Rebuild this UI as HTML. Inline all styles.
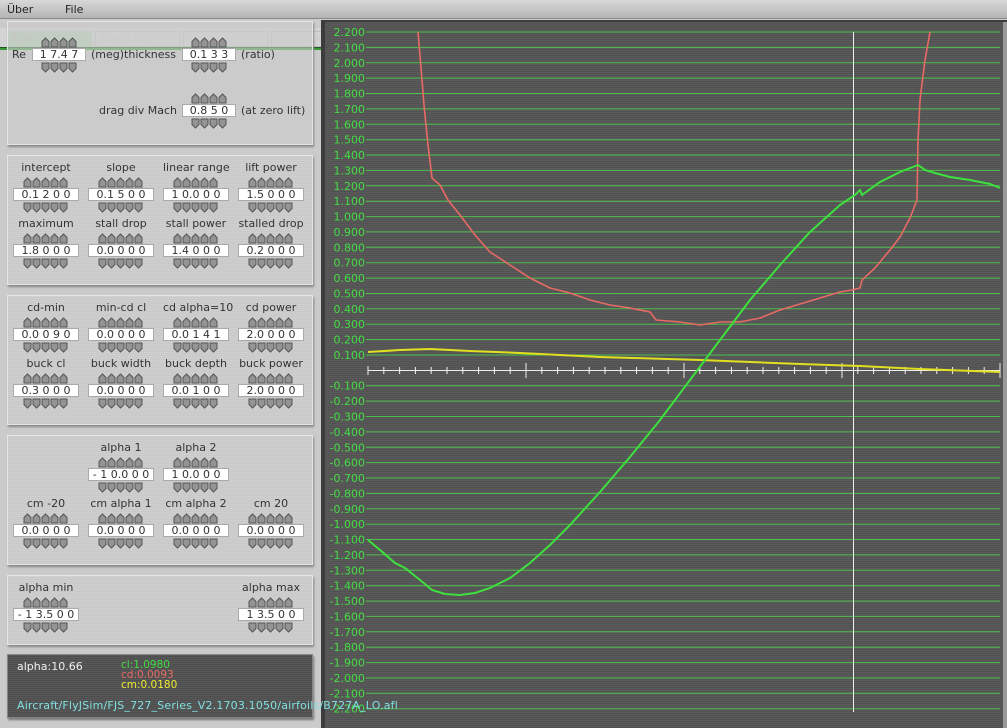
<!DOCTYPE html>
<html><head><meta charset="utf-8"><style>
*{margin:0;padding:0;box-sizing:border-box}
body{width:1007px;height:728px;overflow:hidden;position:relative;background:#cbcbcb;font-family:"DejaVu Sans","Liberation Sans",sans-serif;font-size:11px;color:#333}
.abs{position:absolute}
.menu{left:0;top:0;width:1007px;height:19px;background:linear-gradient(#d8d8d8,#b4b4b4);border-bottom:1px solid #8a8a8a}
.menu span{position:absolute;top:3px;font-size:11px;color:#222}
.pn{position:absolute;left:7px;width:306px;background:repeating-linear-gradient(#cfcfcf 0 1px,#c9c9c9 1px 2px);border:1px solid #e6e6e6;box-shadow:1px 2px 2px #888}
.lb{position:absolute;text-align:center;font-size:11px;color:#333;line-height:14px;white-space:nowrap}
.fd{position:absolute;height:13px;background:#fff;border:1px solid #aaa;font-size:11px;line-height:11px;text-align:center;color:#333;letter-spacing:0;white-space:pre;overflow:hidden}
svg.ar{position:absolute;width:45px;height:10px;overflow:visible}
</style></head><body>
<svg width="0" height="0" style="position:absolute">
<defs>
<path id="u" d="M1,10 V4.5 L4.5,1 L8,4.5 V10 Z" fill="#949494" stroke="#555" stroke-width="1"/>
<path id="d" d="M1,0 V5.5 L4.5,9 L8,5.5 V0 Z" fill="#949494" stroke="#555" stroke-width="1"/>
<g id="u5"><use href="#u"/><use href="#u" x="9"/><use href="#u" x="18"/><use href="#u" x="27"/><use href="#u" x="36"/></g>
<g id="d5"><use href="#d"/><use href="#d" x="9"/><use href="#d" x="18"/><use href="#d" x="27"/><use href="#d" x="36"/></g>
<g id="u4"><use href="#u"/><use href="#u" x="9"/><use href="#u" x="18"/><use href="#u" x="27"/></g>
<g id="d4"><use href="#d"/><use href="#d" x="9"/><use href="#d" x="18"/><use href="#d" x="27"/></g>
</defs></svg>

<div class="abs menu"><span style="left:7px">Über</span><span style="left:65px">File</span></div>
<div class="abs" style="left:0;top:28px;width:1007px;height:20px;background:#d4d4d4"></div>
<div class="abs" style="left:7px;top:31px;width:85px;height:16px;background:#b7d1b7;color:#bbb;padding-left:3px">AOA-</div>
<div class="abs" style="left:95px;top:31px;width:85px;height:16px;border:1px solid #c0c0c0;color:#ccc;padding-left:3px">AOA-180</div>
<div class="abs" style="left:183px;top:31px;width:85px;height:16px;border:1px solid #c0c0c0"></div>
<div class="abs" style="left:271px;top:31px;width:60px;height:16px;border:1px solid #c0c0c0;color:#ccc;padding-left:3px">Teilstück</div>
<div class="abs" style="left:0;top:47px;width:1007px;height:3px;background:#3a9a3a;border-top:1px solid #225522"></div>

<div class="abs" style="left:321px;top:20px;width:686px;height:708px;background:#3c3c3c"></div>
<svg class="abs" style="left:0;top:0" width="1007" height="728">
<defs><pattern id="sl" width="4" height="2" patternUnits="userSpaceOnUse"><rect width="4" height="1" fill="#5a5a5a"/><rect y="1" width="4" height="1" fill="#525252"/></pattern></defs>
<rect x="325" y="22" width="678" height="706" fill="url(#sl)"/>
<rect x="1003" y="22" width="4" height="706" fill="#9a9a9a"/>
<g stroke="#4fc04f" stroke-width="1">
<line x1="366" x2="1000" y1="32" y2="32"/><line x1="366" x2="1000" y1="47.4" y2="47.4"/><line x1="366" x2="1000" y1="62.8" y2="62.8"/><line x1="366" x2="1000" y1="78.1" y2="78.1"/><line x1="366" x2="1000" y1="93.5" y2="93.5"/><line x1="366" x2="1000" y1="108.9" y2="108.9"/><line x1="366" x2="1000" y1="124.3" y2="124.3"/><line x1="366" x2="1000" y1="139.7" y2="139.7"/><line x1="366" x2="1000" y1="155" y2="155"/><line x1="366" x2="1000" y1="170.4" y2="170.4"/><line x1="366" x2="1000" y1="185.8" y2="185.8"/><line x1="366" x2="1000" y1="201.2" y2="201.2"/><line x1="366" x2="1000" y1="216.6" y2="216.6"/><line x1="366" x2="1000" y1="231.9" y2="231.9"/><line x1="366" x2="1000" y1="247.3" y2="247.3"/><line x1="366" x2="1000" y1="262.7" y2="262.7"/><line x1="366" x2="1000" y1="278.1" y2="278.1"/><line x1="366" x2="1000" y1="293.5" y2="293.5"/><line x1="366" x2="1000" y1="308.8" y2="308.8"/><line x1="366" x2="1000" y1="324.2" y2="324.2"/><line x1="366" x2="1000" y1="339.6" y2="339.6"/><line x1="366" x2="1000" y1="355" y2="355"/>
<line x1="366" x2="1000" y1="385.7" y2="385.7"/><line x1="366" x2="1000" y1="401.1" y2="401.1"/><line x1="366" x2="1000" y1="416.5" y2="416.5"/><line x1="366" x2="1000" y1="431.9" y2="431.9"/><line x1="366" x2="1000" y1="447.3" y2="447.3"/><line x1="366" x2="1000" y1="462.6" y2="462.6"/><line x1="366" x2="1000" y1="478" y2="478"/><line x1="366" x2="1000" y1="493.4" y2="493.4"/><line x1="366" x2="1000" y1="508.8" y2="508.8"/><line x1="366" x2="1000" y1="524.2" y2="524.2"/><line x1="366" x2="1000" y1="539.5" y2="539.5"/><line x1="366" x2="1000" y1="554.9" y2="554.9"/><line x1="366" x2="1000" y1="570.3" y2="570.3"/><line x1="366" x2="1000" y1="585.7" y2="585.7"/><line x1="366" x2="1000" y1="601.1" y2="601.1"/><line x1="366" x2="1000" y1="616.4" y2="616.4"/><line x1="366" x2="1000" y1="631.8" y2="631.8"/><line x1="366" x2="1000" y1="647.2" y2="647.2"/><line x1="366" x2="1000" y1="662.6" y2="662.6"/><line x1="366" x2="1000" y1="678" y2="678"/><line x1="366" x2="1000" y1="693.3" y2="693.3"/><line x1="366" x2="1000" y1="708.7" y2="708.7"/>
</g>
<g fill="#44dd44" font-family="DejaVu Sans, Liberation Sans, sans-serif" font-size="11" text-anchor="end">
<text x="365" y="36">2.200</text><text x="365" y="51.4">2.100</text><text x="365" y="66.8">2.000</text><text x="365" y="82.1">1.900</text><text x="365" y="97.5">1.800</text><text x="365" y="112.9">1.700</text><text x="365" y="128.3">1.600</text><text x="365" y="143.7">1.500</text><text x="365" y="159">1.400</text><text x="365" y="174.4">1.300</text><text x="365" y="189.8">1.200</text><text x="365" y="205.2">1.100</text><text x="365" y="220.6">1.000</text><text x="365" y="235.9">0.900</text><text x="365" y="251.3">0.800</text><text x="365" y="266.7">0.700</text><text x="365" y="282.1">0.600</text><text x="365" y="297.5">0.500</text><text x="365" y="312.8">0.400</text><text x="365" y="328.2">0.300</text><text x="365" y="343.6">0.200</text><text x="365" y="359">0.100</text>
<text x="365" y="389.7">-0.100</text><text x="365" y="405.1">-0.200</text><text x="365" y="420.5">-0.300</text><text x="365" y="435.9">-0.400</text><text x="365" y="451.3">-0.500</text><text x="365" y="466.6">-0.600</text><text x="365" y="482">-0.700</text><text x="365" y="497.4">-0.800</text><text x="365" y="512.8">-0.900</text><text x="365" y="528.2">-1.000</text><text x="365" y="543.5">-1.100</text><text x="365" y="558.9">-1.200</text><text x="365" y="574.3">-1.300</text><text x="365" y="589.7">-1.400</text><text x="365" y="605.1">-1.500</text><text x="365" y="620.4">-1.600</text><text x="365" y="635.8">-1.700</text><text x="365" y="651.2">-1.800</text><text x="365" y="666.6">-1.900</text><text x="365" y="682">-2.000</text><text x="365" y="697.3">-2.100</text><text x="365" y="712.7">-2.200</text>
</g>
<g stroke="#f0f0f0" stroke-width="1">
<line x1="368" x2="1000" y1="370.5" y2="370.5"/>
<path d="M368,366v9M526,363v15M684,363v15M842,363v15M1000,363v15"/>
<path d="M383.8,367v7M399.6,367v7M415.4,367v7M431.2,367v7M447,367v7M462.8,367v7M478.6,367v7M494.4,367v7M510.2,367v7M541.8,367v7M557.6,367v7M573.4,367v7M589.2,367v7M605,367v7M620.8,367v7M636.6,367v7M652.4,367v7M668.2,367v7M699.8,367v7M715.6,367v7M731.4,367v7M747.2,367v7M763,367v7M778.8,367v7M794.6,367v7M810.4,367v7M826.2,367v7M857.8,367v7M873.6,367v7M889.4,367v7M905.2,367v7M921,367v7M936.8,367v7M952.6,367v7M968.4,367v7M984.2,367v7"/>
<line x1="853.5" x2="853.5" y1="32" y2="712"/>
</g>
<polyline fill="none" stroke="#e0e020" stroke-width="2" points="368,352 400,350 430,349 470,351 520,353 600,357 700,360 800,364 860,366 920,369 1000,372"/>
<polyline fill="none" stroke="#e86a64" stroke-width="1.6" points="418,32 422,80 424,105 428,145 432,178 440,185 448,200 460,215 475,235 490,252 510,265 530,278 550,288 570,293 590,300 610,305 630,308 650,312 656,320 680,322 700,325 720,322 740,322 760,318 780,310 800,304 820,298 840,292 852,290 860,288 862,280 875,268 890,250 900,237 910,218 917,200 918,140 920,100 925,60 930,32"/>
<polyline fill="none" stroke="#3ee03e" stroke-width="2" points="368,540 380,550 395,563 405,568 420,580 432,590 445,594 460,595 475,593 490,588 510,578 530,563 550,545 570,525 600,492 630,457 660,420 690,380 720,340 750,300 780,265 810,232 840,205 855,195 860,190 862,195 880,182 900,172 918,165 925,170 935,173 950,177 970,180 990,184 1000,188"/>
</svg>

<div class="pn" style="top:21px;height:124px;background:rgba(204,204,204,0.6)"></div>
<div class="lb" style="left:12px;top:48px">Re</div>
<svg class="ar" style="left:41px;top:37px"><use href="#u4"/></svg>
<div class="fd" style="left:32px;top:48px;width:54px">1 7.4 7</div>
<svg class="ar" style="left:41px;top:63px"><use href="#d4"/></svg>
<div class="lb" style="left:91px;top:48px">(meg)thickness</div>
<svg class="ar" style="left:191px;top:37px"><use href="#u4"/></svg>
<div class="fd" style="left:182px;top:48px;width:54px">0.1 3 3</div>
<svg class="ar" style="left:191px;top:63px"><use href="#d4"/></svg>
<div class="lb" style="left:241px;top:48px">(ratio)</div>
<div class="lb" style="left:97px;top:104px;width:80px;text-align:right">drag div Mach</div>
<svg class="ar" style="left:191px;top:93px"><use href="#u4"/></svg>
<div class="fd" style="left:182px;top:104px;width:54px">0.8 5 0</div>
<svg class="ar" style="left:191px;top:119px"><use href="#d4"/></svg>
<div class="lb" style="left:241px;top:104px">(at zero lift)</div>

<div class="pn" style="top:155px;height:130px"></div>
<div class="pn" style="top:295px;height:130px"></div>
<div class="pn" style="top:435px;height:130px"></div>
<div class="pn" style="top:575px;height:70px"></div>

<div class="lb" style="left:13px;top:161px;width:66px">intercept</div><svg class="ar" style="left:23px;top:177px"><use href="#u5"/></svg><div class="fd" style="left:13px;top:188px;width:66px">0.1 2 0 0</div><svg class="ar" style="left:23px;top:203px"><use href="#d5"/></svg>
<div class="lb" style="left:88px;top:161px;width:66px">slope</div><svg class="ar" style="left:98px;top:177px"><use href="#u5"/></svg><div class="fd" style="left:88px;top:188px;width:66px">0.1 5 0 0</div><svg class="ar" style="left:98px;top:203px"><use href="#d5"/></svg>
<div class="lb" style="left:163px;top:161px;width:66px">linear range</div><svg class="ar" style="left:173px;top:177px"><use href="#u5"/></svg><div class="fd" style="left:163px;top:188px;width:66px">1 0.0 0 0</div><svg class="ar" style="left:173px;top:203px"><use href="#d5"/></svg>
<div class="lb" style="left:238px;top:161px;width:66px">lift power</div><svg class="ar" style="left:248px;top:177px"><use href="#u5"/></svg><div class="fd" style="left:238px;top:188px;width:66px">1.5 0 0 0</div><svg class="ar" style="left:248px;top:203px"><use href="#d5"/></svg>

<div class="lb" style="left:13px;top:217px;width:66px">maximum</div><svg class="ar" style="left:23px;top:233px"><use href="#u5"/></svg><div class="fd" style="left:13px;top:244px;width:66px">1.8 0 0 0</div><svg class="ar" style="left:23px;top:259px"><use href="#d5"/></svg>
<div class="lb" style="left:88px;top:217px;width:66px">stall drop</div><svg class="ar" style="left:98px;top:233px"><use href="#u5"/></svg><div class="fd" style="left:88px;top:244px;width:66px">0.0 0 0 0</div><svg class="ar" style="left:98px;top:259px"><use href="#d5"/></svg>
<div class="lb" style="left:163px;top:217px;width:66px">stall power</div><svg class="ar" style="left:173px;top:233px"><use href="#u5"/></svg><div class="fd" style="left:163px;top:244px;width:66px">1.4 0 0 0</div><svg class="ar" style="left:173px;top:259px"><use href="#d5"/></svg>
<div class="lb" style="left:238px;top:217px;width:66px">stalled drop</div><svg class="ar" style="left:248px;top:233px"><use href="#u5"/></svg><div class="fd" style="left:238px;top:244px;width:66px">0.2 0 0 0</div><svg class="ar" style="left:248px;top:259px"><use href="#d5"/></svg>

<div class="lb" style="left:13px;top:301px;width:66px">cd-min</div><svg class="ar" style="left:23px;top:317px"><use href="#u5"/></svg><div class="fd" style="left:13px;top:328px;width:66px">0.0 0 9 0</div><svg class="ar" style="left:23px;top:343px"><use href="#d5"/></svg>
<div class="lb" style="left:88px;top:301px;width:66px">min-cd cl</div><svg class="ar" style="left:98px;top:317px"><use href="#u5"/></svg><div class="fd" style="left:88px;top:328px;width:66px">0.0 0 0 0</div><svg class="ar" style="left:98px;top:343px"><use href="#d5"/></svg>
<div class="lb" style="left:163px;top:301px;width:66px">cd alpha=10</div><svg class="ar" style="left:173px;top:317px"><use href="#u5"/></svg><div class="fd" style="left:163px;top:328px;width:66px">0.0 1 4 1</div><svg class="ar" style="left:173px;top:343px"><use href="#d5"/></svg>
<div class="lb" style="left:238px;top:301px;width:66px">cd power</div><svg class="ar" style="left:248px;top:317px"><use href="#u5"/></svg><div class="fd" style="left:238px;top:328px;width:66px">2.0 0 0 0</div><svg class="ar" style="left:248px;top:343px"><use href="#d5"/></svg>

<div class="lb" style="left:13px;top:357px;width:66px">buck cl</div><svg class="ar" style="left:23px;top:373px"><use href="#u5"/></svg><div class="fd" style="left:13px;top:384px;width:66px">0.3 0 0 0</div><svg class="ar" style="left:23px;top:399px"><use href="#d5"/></svg>
<div class="lb" style="left:88px;top:357px;width:66px">buck width</div><svg class="ar" style="left:98px;top:373px"><use href="#u5"/></svg><div class="fd" style="left:88px;top:384px;width:66px">0.0 0 0 0</div><svg class="ar" style="left:98px;top:399px"><use href="#d5"/></svg>
<div class="lb" style="left:163px;top:357px;width:66px">buck depth</div><svg class="ar" style="left:173px;top:373px"><use href="#u5"/></svg><div class="fd" style="left:163px;top:384px;width:66px">0.0 1 0 0</div><svg class="ar" style="left:173px;top:399px"><use href="#d5"/></svg>
<div class="lb" style="left:238px;top:357px;width:66px">buck power</div><svg class="ar" style="left:248px;top:373px"><use href="#u5"/></svg><div class="fd" style="left:238px;top:384px;width:66px">2.0 0 0 0</div><svg class="ar" style="left:248px;top:399px"><use href="#d5"/></svg>

<div class="lb" style="left:88px;top:441px;width:66px">alpha 1</div><svg class="ar" style="left:98px;top:457px"><use href="#u5"/></svg><div class="fd" style="left:88px;top:468px;width:66px">- 1 0.0 0 0</div><svg class="ar" style="left:98px;top:483px"><use href="#d5"/></svg>
<div class="lb" style="left:163px;top:441px;width:66px">alpha 2</div><svg class="ar" style="left:173px;top:457px"><use href="#u5"/></svg><div class="fd" style="left:163px;top:468px;width:66px">1 0.0 0 0</div><svg class="ar" style="left:173px;top:483px"><use href="#d5"/></svg>

<div class="lb" style="left:13px;top:497px;width:66px">cm -20</div><svg class="ar" style="left:23px;top:513px"><use href="#u5"/></svg><div class="fd" style="left:13px;top:524px;width:66px">0.0 0 0 0</div><svg class="ar" style="left:23px;top:539px"><use href="#d5"/></svg>
<div class="lb" style="left:88px;top:497px;width:66px">cm alpha 1</div><svg class="ar" style="left:98px;top:513px"><use href="#u5"/></svg><div class="fd" style="left:88px;top:524px;width:66px">0.0 0 0 0</div><svg class="ar" style="left:98px;top:539px"><use href="#d5"/></svg>
<div class="lb" style="left:163px;top:497px;width:66px">cm alpha 2</div><svg class="ar" style="left:173px;top:513px"><use href="#u5"/></svg><div class="fd" style="left:163px;top:524px;width:66px">0.0 0 0 0</div><svg class="ar" style="left:173px;top:539px"><use href="#d5"/></svg>
<div class="lb" style="left:238px;top:497px;width:66px">cm 20</div><svg class="ar" style="left:248px;top:513px"><use href="#u5"/></svg><div class="fd" style="left:238px;top:524px;width:66px">0.0 0 0 0</div><svg class="ar" style="left:248px;top:539px"><use href="#d5"/></svg>

<div class="lb" style="left:13px;top:581px;width:66px">alpha min</div><svg class="ar" style="left:23px;top:597px"><use href="#u5"/></svg><div class="fd" style="left:13px;top:608px;width:66px">- 1 3.5 0 0</div><svg class="ar" style="left:23px;top:623px"><use href="#d5"/></svg>
<div class="lb" style="left:238px;top:581px;width:66px">alpha max</div><svg class="ar" style="left:248px;top:597px"><use href="#u5"/></svg><div class="fd" style="left:238px;top:608px;width:66px">1 3.5 0 0</div><svg class="ar" style="left:248px;top:623px"><use href="#d5"/></svg>

<div class="abs" style="left:7px;top:654px;width:306px;height:64px;background:repeating-linear-gradient(#585858 0 1px,#4e4e4e 1px 2px);border:1px solid #888;box-shadow:1px 2px 2px #777"></div>
<div class="abs" style="left:17px;top:660px;color:#f0f0f0;font-size:11px">alpha:10.66</div>
<div class="abs" style="left:121px;top:660px;color:#44dd44;font-size:10.5px;line-height:10px">cl:1.0980</div>
<div class="abs" style="left:121px;top:670px;color:#e86a64;font-size:10.5px;line-height:10px">cd:0.0093</div>
<div class="abs" style="left:121px;top:680px;color:#eeee30;font-size:10.5px;line-height:10px">cm:0.0180</div>
<div class="abs" style="left:17px;top:699px;color:#80e0e0;font-size:11px;letter-spacing:0.17px;white-space:nowrap">Aircraft/FlyJSim/FJS_727_Series_V2.1703.1050/airfoils/B727A_LO.afl</div>
</body></html>
